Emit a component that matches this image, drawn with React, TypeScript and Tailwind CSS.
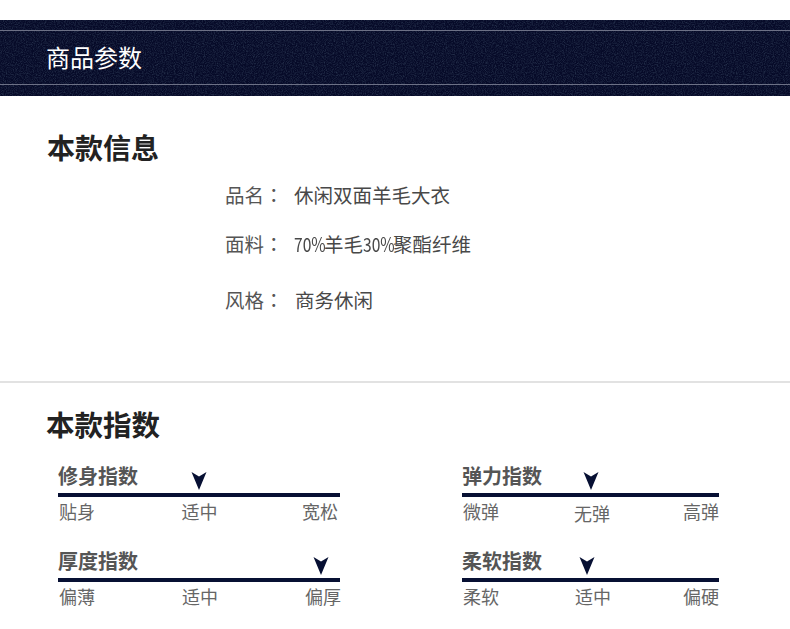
const FONT = "font-['Noto_Sans_CJK_SC','Noto_Sans_CJK_JP',sans-serif]"

interface Gauge {
  title: string
  labels: [string, string, string]
  arrowX: number
  labelRow: string
  midLabel: string
}

const gauges: Gauge[] = [
  { title: '修身指数', labels: ['贴身', '适中', '宽松'], arrowX: 141, labelRow: 'pl-px pr-0.5', midLabel: 'translate-x-px' },
  { title: '弹力指数', labels: ['微弹', '无弹', '高弹'], arrowX: 129, labelRow: 'pl-px pr-0', midLabel: 'translate-x-px translate-y-0.5' },
  { title: '厚度指数', labels: ['偏薄', '适中', '偏厚'], arrowX: 263, labelRow: 'pl-px -mr-px', midLabel: 'translate-x-0' },
  { title: '柔软指数', labels: ['柔软', '适中', '偏硬'], arrowX: 125, labelRow: 'pl-px pr-0', midLabel: 'translate-x-0.5' },
]

export default function App() {
  return (
    <div className={`h-[629px] w-[790px] overflow-hidden bg-white ${FONT}`}>
      {/* Banner */}
      <div className="pt-5">
        <div className="relative h-[76px] overflow-hidden bg-[#060a28] pt-[10px]">
          <svg className="absolute inset-0 h-full w-full" aria-hidden="true">
            <filter id="grain">
              <feTurbulence type="fractalNoise" baseFrequency="0.9" numOctaves="2" seed="4" />
              <feColorMatrix values="0 0 0 0 0.12  0 0 0 0 0.2  0 0 0 0 0.28  0.7 0 0 0 -0.28" />
            </filter>
            <rect width="100%" height="100%" filter="url(#grain)" />
          </svg>
          <div className="relative h-[55px] border-y border-[#6d7186]">
            <h1 className="pl-[46px] pt-[8px] text-[24px] leading-[36px] font-normal text-white">商品参数</h1>
          </div>
        </div>
      </div>

      {/* 本款信息 */}
      <section className="h-[287px] border-b-2 border-[#e2e2e2] pt-[31px]">
        <h2 className="pl-[47px] text-[28px] leading-[40px] font-bold text-[#222]">本款信息</h2>
        <div className="pl-[225px] text-[19.5px] leading-[28px] text-[#484848]">
          <p className="mt-[14px] flex">
            <Label>品名</Label>
            <span className="-translate-x-px">休闲双面羊毛大衣</span>
          </p>
          <p className="mt-[21px] flex">
            <Label>面料</Label>
            <span className="flex -translate-x-px">
              <Narrow>70%</Narrow>羊毛<Narrow>30%</Narrow>聚酯纤维
            </span>
          </p>
          <p className="mt-[28px] flex">
            <Label>风格</Label>
            <span>商务休闲</span>
          </p>
        </div>
      </section>

      {/* 本款指数 */}
      <section className="pt-[21px]">
        <h2 className="pl-[46px] text-[28.5px] leading-[40px] font-bold text-[#222]">本款指数</h2>
        <div className="mt-[15px] grid grid-cols-[282px_257px] gap-x-[122px] gap-y-[20px] pl-[58px]">
          {gauges.map(g => (
            <GaugeRow key={g.title} gauge={g} />
          ))}
        </div>
      </section>
    </div>
  )
}

function Label({ children }: { children: string }) {
  return (
    <span className="flex w-[70px] text-[#555]">
      {children}
      <span className="font-['Noto_Sans_CJK_TC',sans-serif]">：</span>
    </span>
  )
}

function Narrow({ children }: { children: string }) {
  return (
    <span className="inline-block w-[30px] origin-left scale-x-[0.8] whitespace-nowrap">{children}</span>
  )
}

function GaugeRow({ gauge }: { gauge: Gauge }) {
  return (
    <div className="relative">
      <h3 className="h-[34px] text-[20px] leading-[34px] font-bold text-[#555]">{gauge.title}</h3>
      <svg
        className="absolute top-[13px]"
        style={{ left: gauge.arrowX - 8 }}
        width="16"
        height="18"
        viewBox="0 0 16 18"
        aria-hidden="true"
      >
        <path d="M0.5 0 L8 4.5 L15.5 0 L8 18 Z" fill="#071033" />
      </svg>
      <div className="h-1 bg-[#071033]" />
      <div className={`flex justify-between pt-px text-[18px] leading-[26px] text-[#666] ${gauge.labelRow}`}>
        <span>{gauge.labels[0]}</span>
        <span className={gauge.midLabel}>{gauge.labels[1]}</span>
        <span>{gauge.labels[2]}</span>
      </div>
    </div>
  )
}
